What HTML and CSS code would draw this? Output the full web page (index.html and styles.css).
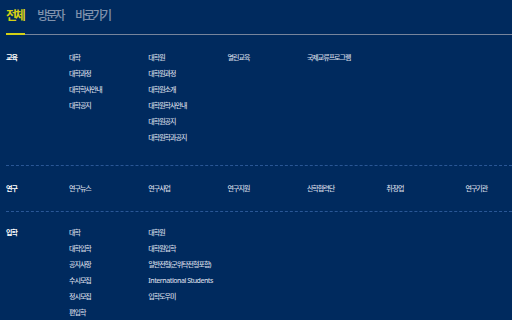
FILE: index.html
```html
<!DOCTYPE html>
<html lang="ko">
<head>
<meta charset="utf-8">
<link rel="stylesheet" href="styles.css">
</head>
<body>
<div class="page">
  <nav class="tabs">
    <a class="tab active">전체</a>
    <a class="tab">방문자</a>
    <a class="tab">바로가기</a>
  </nav>

  <section class="group group-first">
    <h3 class="label">교육</h3>
    <ul class="col"><li>대학</li><li>대학과정</li><li>대학학사안내</li><li>대학공지</li></ul>
    <ul class="col"><li>대학원</li><li>대학원과정</li><li>대학원소개</li><li>대학원학사안내</li><li>대학원공지</li><li>대학원학과공지</li></ul>
    <ul class="col"><li>열린교육</li></ul>
    <ul class="col"><li>국제교류프로그램</li></ul>
  </section>

  <section class="group group-mid">
    <h3 class="label">연구</h3>
    <ul class="col"><li>연구뉴스</li></ul>
    <ul class="col"><li>연구사업</li></ul>
    <ul class="col"><li>연구지원</li></ul>
    <ul class="col"><li>산학협력단</li></ul>
    <ul class="col"><li>취·창업</li></ul>
    <ul class="col"><li>연구기관</li></ul>
  </section>

  <section class="group group-last">
    <h3 class="label">입학</h3>
    <ul class="col"><li>대학</li><li>대학입학</li><li>공지사항</li><li>수시모집</li><li>정시모집</li><li>편입학</li></ul>
    <ul class="col"><li>대학원</li><li>대학원입학</li><li>일반전형(군위탁전형포함)</li><li class="en">International Students</li><li>입학도우미</li></ul>
  </section>
</div>
</body>
</html>
```

FILE: styles.css
```css
html, body {
  margin: 0;
  padding: 0;
  height: 100%;
  overflow: hidden;
  background: #002a5e;
}

.page {
  padding-left: 6px;
  font-family: "Noto Sans", "Noto Sans CJK KR", sans-serif;
  color: #d0d7e2;
}

.tabs {
  display: flex;
  gap: 12px;
  padding-top: 6px;
  border-bottom: 1px solid #76849c;
}

.tab {
  display: block;
  font-size: 12px;
  line-height: 19px;
  letter-spacing: -2.4px;
  padding-bottom: 8px;
  color: #8092ad;
  font-weight: 500;
}

.tab.active {
  color: #d3d016;
  font-weight: 700;
  border-bottom: 2px solid #d3d016;
  margin-bottom: -1px;
  padding-right: 2px;
}

.group {
  display: grid;
  grid-template-columns: 63px repeat(5, 79.3px) 1fr;
  padding: 15px 0 14px;
  border-top: 1px dashed #2a5796;
}

.tabs + .group {
  border-top: none;
}

.group-first {
  padding-top: 15px;
  padding-bottom: 19px;
}

.group-last {
  padding-top: 13px;
}

.label {
  margin: 0;
  font-size: 7px;
  line-height: 16px;
  font-weight: 700;
  color: #ffffff;
  letter-spacing: -1px;
}

.col {
  list-style: none;
  margin: 0;
  padding: 0;
  font-size: 7px;
  line-height: 16px;
  font-weight: 500;
  letter-spacing: -1px;
}

.col li {
  white-space: nowrap;
}

.col .en {
  letter-spacing: -0.5px;
}
```
